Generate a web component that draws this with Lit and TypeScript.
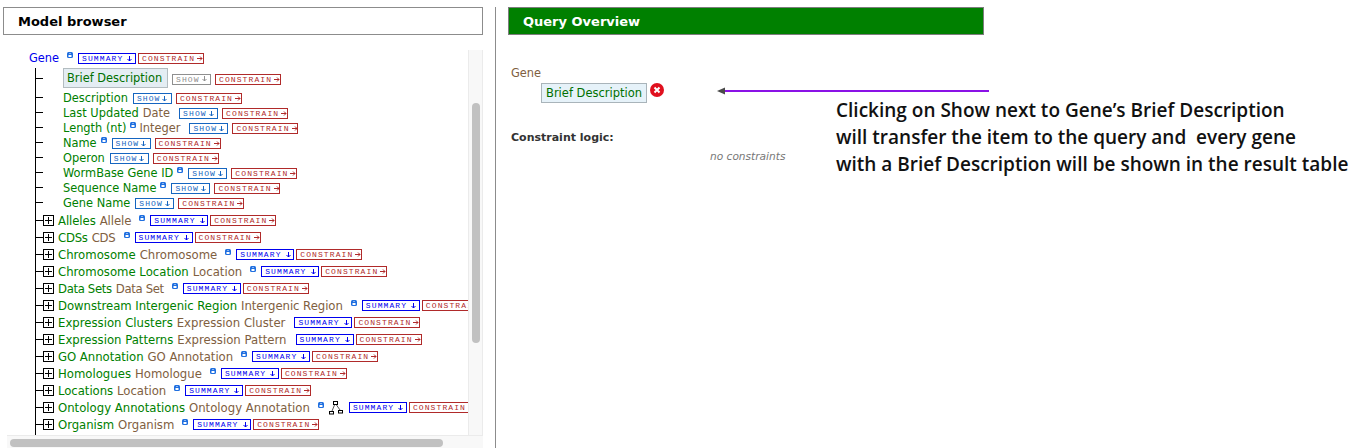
import { LitElement, html, css, nothing } from "lit";
import { customElement } from "lit/decorators.js";
import { styleMap } from "lit/directives/style-map.js";

type Attr = { name: string; type?: string; info?: boolean };
type Rel = { name: string; type: string; tree?: boolean; noInfo?: boolean; ls?: number };

const attrs: Attr[] = [
  { name: "Description" },
  { name: "Last Updated", type: "Date" },
  { name: "Length (nt)", type: "Integer", info: true },
  { name: "Name", info: true },
  { name: "Operon" },
  { name: "WormBase Gene ID", info: true },
  { name: "Sequence Name", info: true },
  { name: "Gene Name" },
];

const rels: Rel[] = [
  { name: "Alleles", type: "Allele", ls: -0.08 },
  { name: "CDSs", type: "CDS", ls: -0.25 },
  { name: "Chromosome", type: "Chromosome" },
  { name: "Chromosome Location", type: "Location" },
  { name: "Data Sets", type: "Data Set", ls: -0.35 },
  { name: "Downstream Intergenic Region", type: "Intergenic Region", ls: -0.05 },
  { name: "Expression Clusters", type: "Expression Cluster", noInfo: true },
  { name: "Expression Patterns", type: "Expression Pattern", noInfo: true },
  { name: "GO Annotation", type: "GO Annotation", ls: -0.04 },
  { name: "Homologues", type: "Homologue" },
  { name: "Locations", type: "Location", ls: -0.05 },
  { name: "Ontology Annotations", type: "Ontology Annotation", tree: true },
  { name: "Organism", type: "Organism", ls: -0.05 },
];

const info = html`<svg class="info" width="6" height="6" viewBox="0 0 6 6">
  <rect width="6" height="6" rx="1.500" fill="#1f6fe0"></rect>
  <rect x="2.500" y="1" width="1" height="1" fill="#fff"></rect>
  <rect x="1.500" y="3" width="3" height="2" fill="#fff"></rect>
</svg>`;

const plus = html`<svg class="plus" width="11" height="11" viewBox="0 0 11 11">
  <rect x=".5" y=".5" width="10" height="10" fill="#fff" stroke="#000"></rect>
  <path d="M2 5.500h7M5.500 2v7" stroke="#000"></path>
</svg>`;

const treeIcon = html`<svg class="tree-icon" width="15" height="15" viewBox="0 0 15 15">
  <rect x="4.500" y="1.500" width="4" height="3" fill="#fff" stroke="#000"></rect>
  <rect x=".5" y="11.500" width="4" height="2.500" fill="#fff" stroke="#000"></rect>
  <rect x="9.500" y="10.500" width="4" height="2.500" fill="#fff" stroke="#000"></rect>
  <path d="M5.500 5L3 11M7.500 5L11 10" stroke="#555" fill="none"></path>
</svg>`;

const arrowRight = html`<svg class="arr" width="6" height="5" viewBox="0 0 6 5">
  <path d="M0 2.500h5M3 .5l2 2-2 2" stroke="currentColor" fill="none"></path>
</svg>`;

const arrowDown = html`<svg class="arr" width="5" height="6" viewBox="0 0 5 6">
  <path d="M2.500 0v5M.5 3l2 2 2-2" stroke="currentColor" fill="none"></path>
</svg>`;

@customElement("app-root")
export class AppRoot extends LitElement {
  static styles = css`
    :host {
      display: block;
      position: relative;
      width: 1349px;
      height: 448px;
      overflow: hidden;
      background: #fff;
      font-family: "DejaVu Sans", sans-serif;
      font-size: 11.7px;
    }
    .page {
      display: grid;
      grid-template-columns: 495px 1px 1fr;
      height: 448px;
    }
    .divider {
      margin-top: 7px;
      background: #8c8c8c;
    }
    .left {
      padding: 7px 12px 0 3px;
      min-width: 0;
    }
    .title {
      box-sizing: border-box;
      height: 28px;
      border: 1px solid #8c8c8c;
      padding-left: 14px;
      display: flex;
      align-items: center;
      font-size: 13px;
      font-weight: 700;
      color: #000;
    }
    .browser {
      display: grid;
      grid-template-columns: 461px 15px;
      grid-template-rows: 385px 13px;
      width: 476px;
      margin: 15px 0 0 4px;
    }
    .viewport {
      overflow: hidden;
    }
    .vtrack {
      box-sizing: border-box;
      background: #f8f8f8;
      border-left: 1px solid #ebebeb;
      border-right: 1px solid #ebebeb;
      padding: 53px 0 0 3px;
    }
    .vthumb {
      width: 8px;
      height: 240px;
      border-radius: 4px;
      background: #c1c1c1;
    }
    .htrack {
      box-sizing: border-box;
      grid-column: 1 / span 2;
      background: #f8f8f8;
      border-top: 1px solid #ebebeb;
      padding: 3px 0 0 3px;
    }
    .hthumb {
      width: 433px;
      height: 8px;
      border-radius: 4px;
      background: #c1c1c1;
    }
    .row {
      display: flex;
      align-items: center;
      height: 15px;
      white-space: nowrap;
    }
    .root {
      padding-left: 22px;
    }
    .root .n {
      color: #0000ee;
      font-size: 11.4px;
    }
    .root .info {
      margin-left: 8px;
    }
    .tree {
      box-sizing: border-box;
      margin: 3px 0 0 28px;
      border-left: 1px solid #000;
      height: 367px;
      width: 433px;
    }
    .tick {
      flex: none;
      width: 7px;
      height: 1px;
      background: #000;
    }
    .attr {
      font-size: 11.4px;
    }
    .attr .tick {
      margin-right: 20px;
    }
    .rels {
      margin-top: 2px;
    }
    .rel {
      height: 17px;
    }
    .brief-row {
      height: 20px;
      margin-bottom: 2px;
    }
    .brief {
      box-sizing: border-box;
      height: 20px;
      width: 105px;
      display: flex;
      align-items: center;
      padding: 0 3px;
      background: #e4edf3;
      border: 1px solid #b3bcc0;
      color: #007000;
    }
    .n {
      color: #008000;
    }
    .t {
      color: #80603f;
      margin-left: 4px;
    }
    .attr .info + .t {
      margin-left: 3px;
    }
    .info {
      flex: none;
      margin-left: 4px;
      position: relative;
      top: -3px;
    }
    .rel .info {
      margin-left: 8px;
    }
    .plus {
      flex: none;
      margin-right: 4px;
    }
    .tree-icon {
      flex: none;
      margin-left: 5px;
    }
    .btns {
      display: flex;
      flex: none;
    }
    .attr .btns {
      margin-left: 5px;
      gap: 4px;
      position: relative;
      top: 1px;
    }
    .attr .brief + .btns {
      margin-left: 4px;
    }
    .attr .t + .btns {
      margin-left: 9px;
    }
    .root .btns {
      margin-left: 5px;
      gap: 2px;
      position: relative;
      top: 1px;
    }
    .rel .btns {
      margin-left: 5px;
      gap: 2px;
    }
    .rel .t + .btns {
      margin-left: 9px;
    }
    .btn {
      box-sizing: border-box;
      height: 11px;
      border: 1px solid currentColor;
      font-family: "Liberation Mono", monospace;
      font-size: 8px;
      letter-spacing: 1.1px;
      line-height: 9px;
      flex: none;
      overflow: hidden;
      display: flex;
      align-items: center;
      padding-left: 3px;
    }
    .arr {
      flex: none;
      margin-left: 2px;
    }
    .sum {
      width: 58px;
      color: #0000ee;
    }
    .sum .arr {
      margin-left: 4px;
    }
    .con {
      width: 66px;
      color: #b02a2a;
    }
    .show {
      width: 39px;
      color: #1565c0;
    }
    .off {
      color: #8f8f8f;
    }
    .right {
      padding: 7px 0 0 12px;
      min-width: 0;
      color: #333;
    }
    .qtitle {
      box-sizing: border-box;
      width: 476px;
      height: 28px;
      background: #008000;
      border: 1px solid #7d7d7d;
      padding-left: 14px;
      display: flex;
      align-items: center;
      color: #fff;
      font-size: 13px;
      font-weight: 700;
    }
    .qgene {
      margin: 31px 0 0 3px;
      color: #80603f;
      font-size: 11.4px;
      height: 15px;
      line-height: 15px;
    }
    .qitem {
      display: flex;
      align-items: flex-start;
      margin: 2px 0 0 33px;
    }
    .pill {
      box-sizing: border-box;
      height: 20px;
      display: flex;
      align-items: center;
      padding: 0 4px;
      background: #e6f2f9;
      border: 1px solid #a9b4ba;
      color: #007000;
      font-size: 11.5px;
    }
    .xicon {
      margin-left: 3px;
    }
    .qlogic {
      margin: 27px 0 0 3px;
      font-weight: 700;
      font-size: 11px;
      height: 15px;
      line-height: 15px;
      color: #333;
    }
    .none {
      margin: 4px 0 0 202px;
      font-style: italic;
      font-size: 10.6px;
      color: #777;
      height: 15px;
      line-height: 15px;
    }
    .arrow {
      position: absolute;
      left: 717px;
      top: 86px;
    }
    .note {
      position: absolute;
      left: 836px;
      top: 97px;
      font-family: "Open Sans", sans-serif;
      font-weight: 600;
      font-size: 19px;
      line-height: 27px;
      color: #111;
      white-space: pre;
    }
  `;

  private btn(cls: string, label: string, arrow: unknown) {
    return html`<span class="btn ${cls}">${label}${arrow}</span>`;
  }

  private attrRow(a: Attr) {
    return html`<div class="row attr">
      <span class="tick"></span>
      <span class="n">${a.name}</span>
      ${a.info ? info : nothing}
      ${a.type ? html`<span class="t">${a.type}</span>` : nothing}
      <span class="btns">${this.btn("show", "SHOW", arrowDown)}${this.btn("con", "CONSTRAIN", arrowRight)}</span>
    </div>`;
  }

  private relRow(r: Rel) {
    const spacing = r.ls ? { letterSpacing: `${r.ls}px` } : {};
    return html`<div class="row rel">
      <span class="tick"></span>
      ${plus}
      <span class="n" style=${styleMap(spacing)}>${r.name}</span>
      <span class="t" style=${styleMap(spacing)}>${r.type}</span>
      ${r.noInfo ? nothing : info}
      ${r.tree ? treeIcon : nothing}
      <span class="btns">${this.btn("sum", "SUMMARY", arrowDown)}${this.btn("con", "CONSTRAIN", arrowRight)}</span>
    </div>`;
  }

  render() {
    return html`
      <div class="page">
        <section class="left">
          <header class="title">Model browser</header>
          <div class="browser">
            <div class="viewport">
              <div class="row root">
                <span class="n">Gene</span>
                ${info}
                <span class="btns">${this.btn("sum", "SUMMARY", arrowDown)}${this.btn("con", "CONSTRAIN", arrowRight)}</span>
              </div>
              <div class="tree">
                <div class="row attr brief-row">
                  <span class="tick"></span>
                  <span class="brief">Brief Description</span>
                  <span class="btns">${this.btn("show off", "SHOW", arrowDown)}${this.btn("con", "CONSTRAIN", arrowRight)}</span>
                </div>
                ${attrs.map((a) => this.attrRow(a))}
                <div class="rels">${rels.map((r) => this.relRow(r))}</div>
              </div>
            </div>
            <div class="vtrack"><div class="vthumb"></div></div>
            <div class="htrack"><div class="hthumb"></div></div>
          </div>
        </section>
        <div class="divider"></div>
        <section class="right">
          <header class="qtitle">Query Overview</header>
          <div class="qgene">Gene</div>
          <div class="qitem">
            <span class="pill">Brief Description</span>
            <svg class="xicon" width="15" height="15" viewBox="0 0 15 15">
              <circle cx="7" cy="7" r="7" fill="#e0101e"></circle>
              <path d="M4.500 4.500l5 5M9.500 4.500l-5 5" stroke="#fff" stroke-width="2"></path>
            </svg>
          </div>
          <div class="qlogic">Constraint logic:</div>
          <div class="none">no constraints</div>
        </section>
      </div>
      <svg class="arrow" width="274" height="10" viewBox="0 0 274 10">
        <rect x="7" y="4" width="265" height="2" fill="#8a12e6"></rect>
        <path d="M0 5L8 1.500V8.500Z" fill="#4a4a4a"></path>
      </svg>
      <div class="note">Clicking on Show next to Gene’s Brief Description
will transfer the item to the query and  every gene
with a Brief Description will be shown in the result table</div>
    `;
  }
}
